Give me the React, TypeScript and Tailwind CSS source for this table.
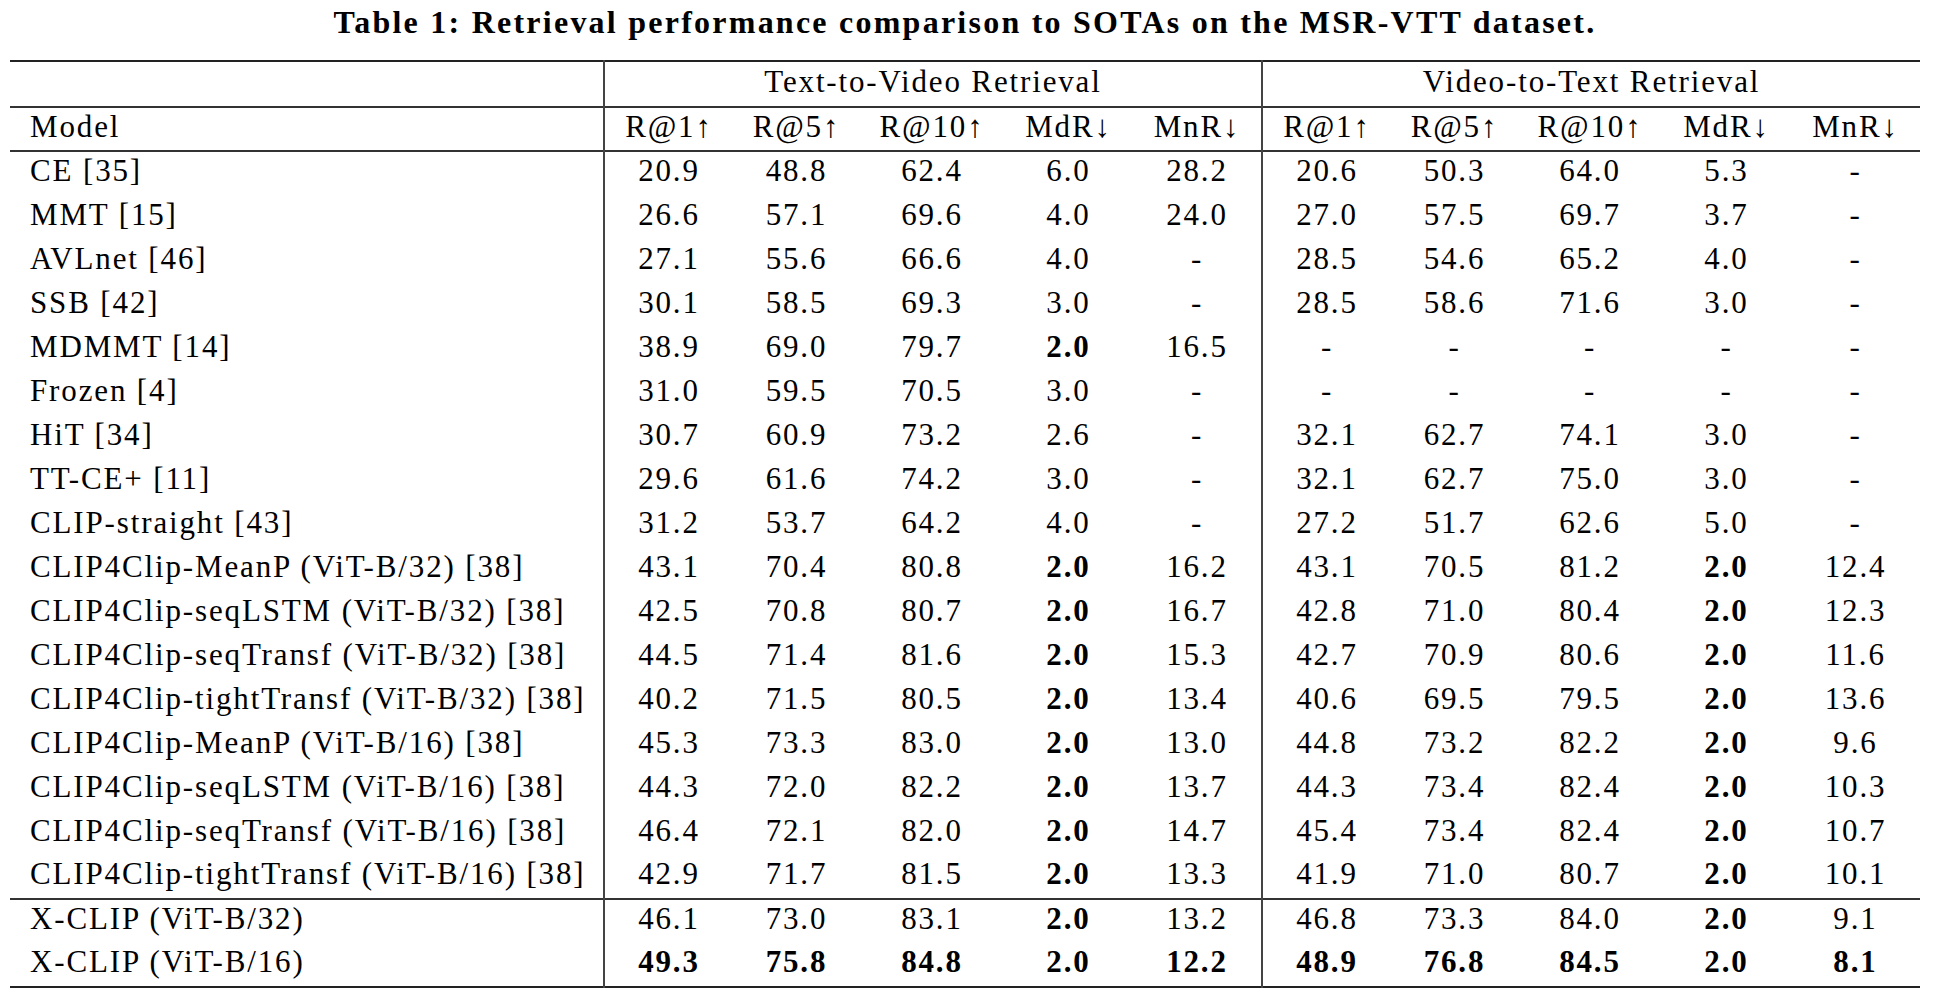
const cols = ["R@1↑", "R@5↑", "R@10↑", "MdR↓", "MnR↓"];

// "*" prefix marks a bold value
const rows: { model: string; t2v: string[]; v2t: string[] }[] = [
  { model: "CE [35]", t2v: ["20.9", "48.8", "62.4", "6.0", "28.2"], v2t: ["20.6", "50.3", "64.0", "5.3", "-"] },
  { model: "MMT [15]", t2v: ["26.6", "57.1", "69.6", "4.0", "24.0"], v2t: ["27.0", "57.5", "69.7", "3.7", "-"] },
  { model: "AVLnet [46]", t2v: ["27.1", "55.6", "66.6", "4.0", "-"], v2t: ["28.5", "54.6", "65.2", "4.0", "-"] },
  { model: "SSB [42]", t2v: ["30.1", "58.5", "69.3", "3.0", "-"], v2t: ["28.5", "58.6", "71.6", "3.0", "-"] },
  { model: "MDMMT [14]", t2v: ["38.9", "69.0", "79.7", "*2.0", "16.5"], v2t: ["-", "-", "-", "-", "-"] },
  { model: "Frozen [4]", t2v: ["31.0", "59.5", "70.5", "3.0", "-"], v2t: ["-", "-", "-", "-", "-"] },
  { model: "HiT [34]", t2v: ["30.7", "60.9", "73.2", "2.6", "-"], v2t: ["32.1", "62.7", "74.1", "3.0", "-"] },
  { model: "TT-CE+ [11]", t2v: ["29.6", "61.6", "74.2", "3.0", "-"], v2t: ["32.1", "62.7", "75.0", "3.0", "-"] },
  { model: "CLIP-straight [43]", t2v: ["31.2", "53.7", "64.2", "4.0", "-"], v2t: ["27.2", "51.7", "62.6", "5.0", "-"] },
  { model: "CLIP4Clip-MeanP (ViT-B/32) [38]", t2v: ["43.1", "70.4", "80.8", "*2.0", "16.2"], v2t: ["43.1", "70.5", "81.2", "*2.0", "12.4"] },
  { model: "CLIP4Clip-seqLSTM (ViT-B/32) [38]", t2v: ["42.5", "70.8", "80.7", "*2.0", "16.7"], v2t: ["42.8", "71.0", "80.4", "*2.0", "12.3"] },
  { model: "CLIP4Clip-seqTransf (ViT-B/32) [38]", t2v: ["44.5", "71.4", "81.6", "*2.0", "15.3"], v2t: ["42.7", "70.9", "80.6", "*2.0", "11.6"] },
  { model: "CLIP4Clip-tightTransf (ViT-B/32) [38]", t2v: ["40.2", "71.5", "80.5", "*2.0", "13.4"], v2t: ["40.6", "69.5", "79.5", "*2.0", "13.6"] },
  { model: "CLIP4Clip-MeanP (ViT-B/16) [38]", t2v: ["45.3", "73.3", "83.0", "*2.0", "13.0"], v2t: ["44.8", "73.2", "82.2", "*2.0", "9.6"] },
  { model: "CLIP4Clip-seqLSTM (ViT-B/16) [38]", t2v: ["44.3", "72.0", "82.2", "*2.0", "13.7"], v2t: ["44.3", "73.4", "82.4", "*2.0", "10.3"] },
  { model: "CLIP4Clip-seqTransf (ViT-B/16) [38]", t2v: ["46.4", "72.1", "82.0", "*2.0", "14.7"], v2t: ["45.4", "73.4", "82.4", "*2.0", "10.7"] },
  { model: "CLIP4Clip-tightTransf (ViT-B/16) [38]", t2v: ["42.9", "71.7", "81.5", "*2.0", "13.3"], v2t: ["41.9", "71.0", "80.7", "*2.0", "10.1"] },
];

const ours: typeof rows = [
  { model: "X-CLIP (ViT-B/32)", t2v: ["46.1", "73.0", "83.1", "*2.0", "13.2"], v2t: ["46.8", "73.3", "84.0", "*2.0", "9.1"] },
  { model: "X-CLIP (ViT-B/16)", t2v: ["*49.3", "*75.8", "*84.8", "*2.0", "*12.2"], v2t: ["*48.9", "*76.8", "*84.5", "*2.0", "*8.1"] },
];

const Val = ({ v, last }: { v: string; last?: boolean }) => {
  const bold = v.startsWith("*");
  return (
    <td className={`text-center p-0 pb-[6px] ${bold ? "font-bold" : ""} ${last ? "border-r-2 border-[#444]" : ""}`}>
      {bold ? v.slice(1) : v}
    </td>
  );
};

const Row = ({ r, top }: { r: (typeof rows)[number]; top?: boolean }) => (
  <tr className={`h-[44px] ${top ? "border-t-2 border-[#333]" : ""}`}>
    <td className="p-0 pl-[20px] pb-[6px] border-r-2 border-[#444] whitespace-nowrap">{r.model}</td>
    {r.t2v.map((v, i) => (
      <Val key={i} v={v} last={i === 4} />
    ))}
    {r.v2t.map((v, i) => (
      <Val key={i} v={v} />
    ))}
  </tr>
);

export default function App() {
  return (
    <div className="w-[1938px] h-[1000px] bg-white text-black font-['Liberation_Serif',serif] text-[31px] leading-none tracking-[0.06em] pt-[8px] pl-[10px]">
      <h1 className="font-bold text-center text-[32px] tracking-[0.07em] w-[1910px] h-[28px] leading-[28px] mb-[24px]">
        Table 1: Retrieval performance comparison to SOTAs on the MSR-VTT dataset.
      </h1>
      <table className="table-fixed border-collapse w-[1910px]">
        <colgroup>
          <col className="w-[594px]" />
          <col className="w-[129px]" />
          <col className="w-[127px]" />
          <col className="w-[144px]" />
          <col className="w-[129px]" />
          <col className="w-[129px]" />
          <col className="w-[129px]" />
          <col className="w-[127px]" />
          <col className="w-[144px]" />
          <col className="w-[129px]" />
          <col className="w-[129px]" />
        </colgroup>
        <thead>
          <tr className="h-[46px] border-t-2 border-[#222]">
            <th className="p-0 border-r-2 border-[#444]" />
            <th colSpan={5} className="p-0 pb-[6px] font-normal text-center border-r-2 border-[#444]">
              Text-to-Video Retrieval
            </th>
            <th colSpan={5} className="p-0 pb-[6px] font-normal text-center">
              Video-to-Text Retrieval
            </th>
          </tr>
          <tr className="h-[44px] border-t-2 border-[#333]">
            <th className="p-0 pl-[20px] pb-[6px] font-normal text-left border-r-2 border-[#444]">Model</th>
            {cols.map((c, i) => (
              <th key={`a${i}`} className={`p-0 pb-[6px] font-normal text-center ${i === 4 ? "border-r-2 border-[#444]" : ""}`}>
                {c}
              </th>
            ))}
            {cols.map((c, i) => (
              <th key={`b${i}`} className="p-0 pb-[6px] font-normal text-center">
                {c}
              </th>
            ))}
          </tr>
        </thead>
        <tbody className="border-t-2 border-[#333]">
          {rows.map((r, i) => (
            <Row key={i} r={r} />
          ))}
          {ours.map((r, i) => (
            <Row key={`o${i}`} r={r} top={i === 0} />
          ))}
        </tbody>
        <tfoot className="border-t-2 border-[#222]">
          <tr>
            <td colSpan={11} className="p-0" />
          </tr>
        </tfoot>
      </table>
    </div>
  );
}
